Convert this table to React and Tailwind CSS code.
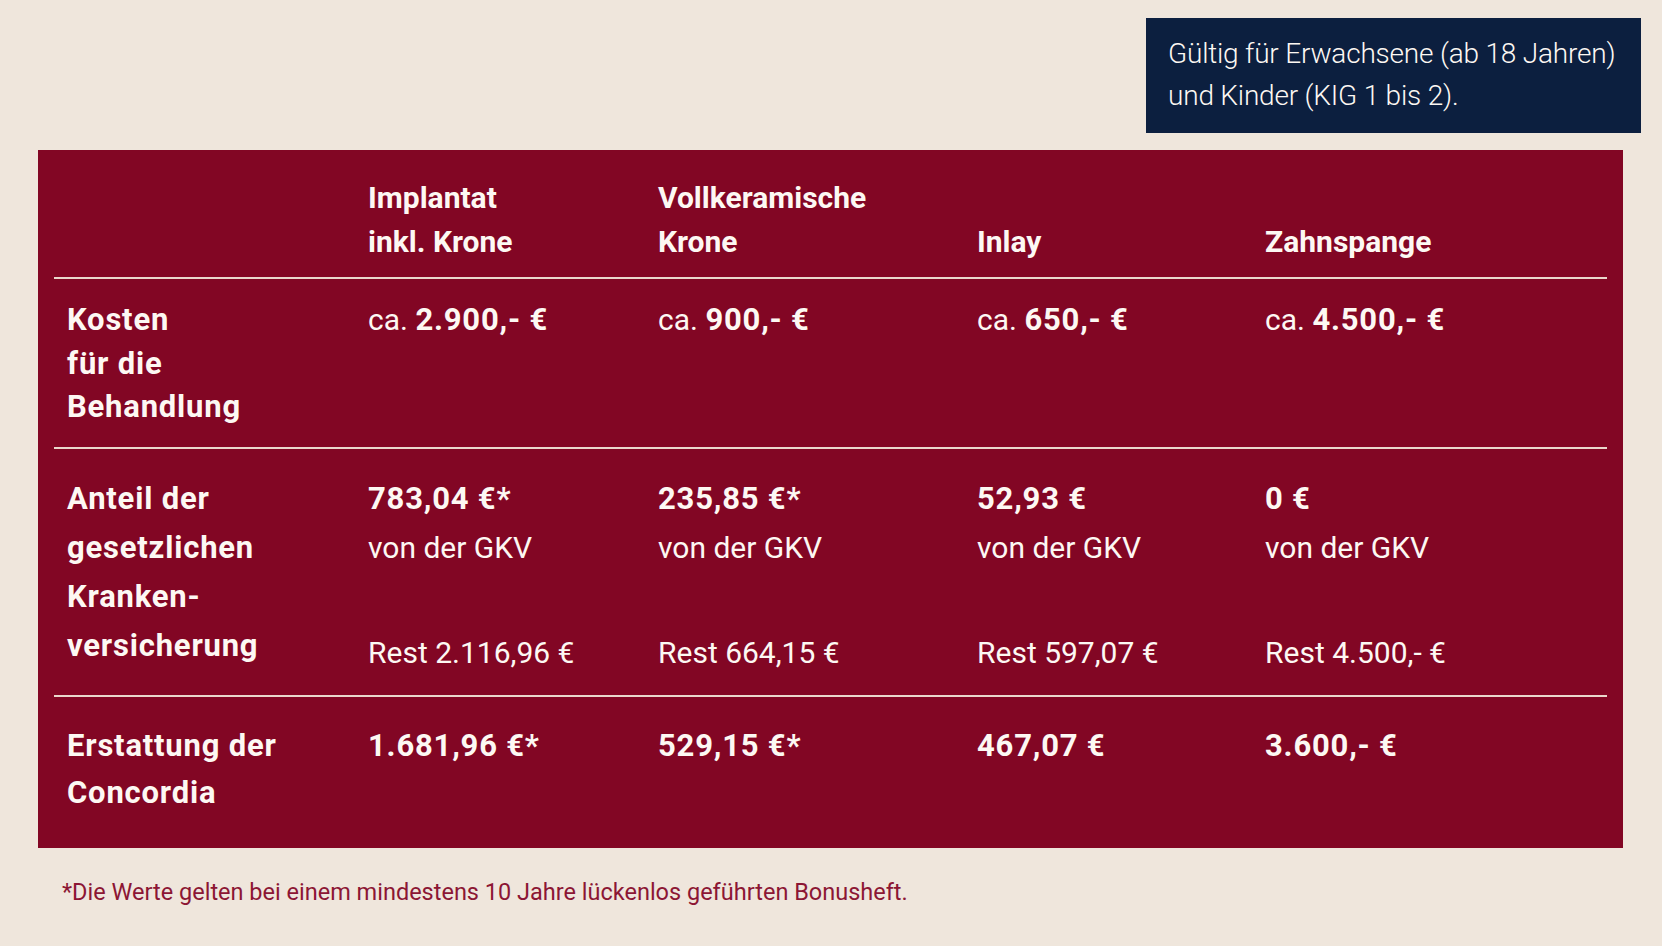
const columns = [
  { head: ['Implantat', 'inkl. Krone'], cost: '2.900,- €', gkv: '783,04 €*', rest: 'Rest 2.116,96 €', refund: '1.681,96 €*' },
  { head: ['Vollkeramische', 'Krone'], cost: '900,- €', gkv: '235,85 €*', rest: 'Rest 664,15 €', refund: '529,15 €*' },
  { head: ['Inlay'], cost: '650,- €', gkv: '52,93 €', rest: 'Rest 597,07 €', refund: '467,07 €' },
  { head: ['Zahnspange'], cost: '4.500,- €', gkv: '0 €', rest: 'Rest 4.500,- €', refund: '3.600,- €' },
];

const grid = 'grid grid-cols-[314px_290px_319px_288px_1fr]';
const strong = 'font-bold text-[31px] tracking-[0.8px]';

export default function App() {
  return (
    <div className="w-[1662px] h-[946px] bg-[#efe6dc] flex flex-col [font-family:Roboto,'Liberation_Sans',sans-serif] text-[#fdf8f3]">
      {/* note box */}
      <div className="self-end mt-[18px] mr-[21px] w-[495px] h-[115px] bg-[#0c1f3f] pl-[22px] pt-[15px] text-[28px] leading-[42px] font-light tracking-[-0.2px]">
        <div>Gültig für Erwachsene (ab 18 Jahren)</div>
        <div>und Kinder (KIG 1 bis 2).</div>
      </div>

      {/* table */}
      <div className="mt-[17px] ml-[38px] w-[1585px] h-[698px] bg-[#820624] px-4 pt-[26px] text-[30px]">
        <div className={`${grid} items-end pb-[14px] border-b-2 border-[#ead7cc] leading-[43.5px] font-bold`}>
          <div />
          {columns.map((c, i) => (
            <div key={i}>
              {c.head.map((h) => (
                <div key={h}>{h}</div>
              ))}
            </div>
          ))}
        </div>

        <div className={`${grid} pt-[19px] pb-[18px] border-b-2 border-[#ead7cc] leading-[43.5px]`}>
          <div className={`pl-[13px] ${strong}`}>
            <div>Kosten</div>
            <div>für die</div>
            <div>Behandlung</div>
          </div>
          {columns.map((c, i) => (
            <div key={i}>
              ca. <span className={strong}>{c.cost}</span>
            </div>
          ))}
        </div>

        <div className={`${grid} pt-[25px] pb-[18px] border-b-2 border-[#ead7cc] leading-[49px]`}>
          <div className={`pl-[13px] ${strong}`}>
            <div>Anteil der</div>
            <div>gesetzlichen</div>
            <div>Kranken-</div>
            <div>versicherung</div>
          </div>
          {columns.map((c, i) => (
            <div key={i}>
              <div className={strong}>{c.gkv}</div>
              <div>von der GKV</div>
              <div className="h-[56px]" />
              <div>{c.rest}</div>
            </div>
          ))}
        </div>

        <div className={`${grid} pt-[25px] leading-[47px] ${strong}`}>
          <div className="pl-[13px]">
            <div>Erstattung der</div>
            <div>Concordia</div>
          </div>
          {columns.map((c, i) => (
            <div key={i}>{c.refund}</div>
          ))}
        </div>
      </div>

      <p className="mt-[29px] pl-[62px] text-[23.5px] leading-[30px] text-[#8c1634]">
        *Die Werte gelten bei einem mindestens 10 Jahre lückenlos geführten Bonusheft.
      </p>
    </div>
  );
}
